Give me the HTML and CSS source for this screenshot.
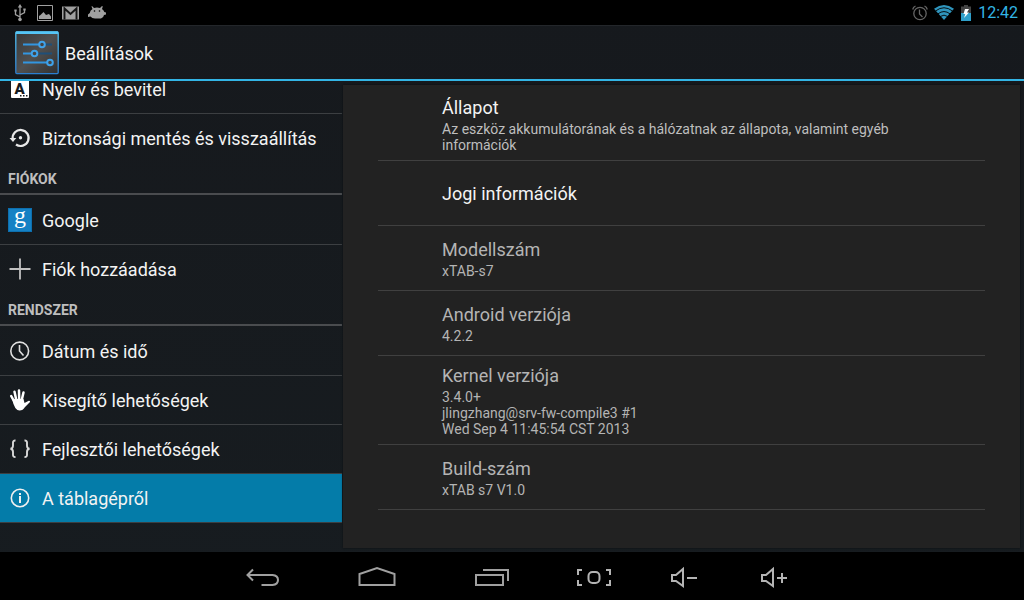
FILE: index.html
```
<!DOCTYPE html>
<html lang="hu">
<head>
    <meta charset="UTF-8">
    <meta name="viewport" content="width=device-width, initial-scale=1.0">
    <title>Beállítások</title>
    <link rel="stylesheet" href="styles.css">
</head>
<body>
    <div class="status-bar">
        <div class="notifications">
            <svg width="16" height="18" viewBox="0 0 16 18" fill="none" stroke="#a0a0a0" stroke-width="1.3">
                <path d="M8 2v13M8 13L3.5 10.500V7M8 11l4.500-2.500V6"/>
                <path d="M8 0l2.200 3.500H5.800zM2.300 5.500h2.400v2H2.300zM11.300 4.500h2.400v2h-2.400z" fill="#a0a0a0" stroke="none"/>
                <circle cx="8" cy="15.500" r="1.800" fill="#a0a0a0" stroke="none"/>
            </svg>
            <svg width="16" height="16" viewBox="0 0 16 16">
                <path d="M.5.5h15v15H.5z" fill="none" stroke="#a0a0a0"/>
                <path d="M2 14v-3l1.500-1L5 8.500l1.500-1.500L9 10l1.500-.5L12 9l2 2.500V14z" fill="#a0a0a0"/>
            </svg>
            <svg width="17" height="14" viewBox="0 0 17 14">
                <path d="M0 .5h17v13H0z" fill="#a0a0a0"/>
                <path d="M2.500 13.500V2.500l6 5.500 6-5.500v11" fill="none" stroke="#151515" stroke-width="1.900"/>
            </svg>
            <svg width="18" height="14" viewBox="0 0 18 14">
                <path d="M4 0l2 2q3-1 6 0l2-2 .8.5-.8 2.500q2 1.500 2.300 3l1.700.5v2l-2 .5q-.5 3-3 3.500H7q-3 0-4.500-2L0 11V8.500L1.800 7Q2 4.500 4.500 3L3.500.5z" fill="#a0a0a0"/>
                <circle cx="6.500" cy="5" r=".8"/>
                <circle cx="11.500" cy="5" r=".8"/>
            </svg>
        </div>
        <div class="system-icons">
            <svg width="16" height="16" viewBox="0 0 16 16" fill="none" stroke="#666" stroke-width="1.300">
                <circle cx="9" cy="8.500" r="6.200"/>
                <path d="M8.500 4.500v4.500l3 3M1.700 4.500Q2.200 2 4.500 1M16.300 4.500Q15.800 2 13.500 1"/>
            </svg>
            <svg width="20" height="15" viewBox="0 0 20 15">
                <path d="M0 3.800Q10-3.600 20 3.800L10 15z" fill="#2f95bd"/>
                <path d="M1.500 6Q10-.5 18.500 6M4 8.800q6-4.500 12 0M6.300 11.500q3.700-2.700 7.400 0" fill="none" stroke="#000" stroke-width=".9"/>
            </svg>
            <svg width="10" height="16" viewBox="0 0 10 16">
                <path d="M0 1.500h3V0h4v1.500h3V16H0z" fill="#444"/>
                <path d="M0 8h10v8H0z" fill="#2f9fc9"/>
                <path d="M4 4h4L6 7.500h2L3 13l1.300-4H2.500z" fill="#fff"/>
            </svg>
            <span class="clock">12:42</span>
        </div>
    </div>

    <header class="action-bar">
        <svg width="44" height="44" viewBox="0 0 44 44">
            <defs>
                <linearGradient id="tile" x1="0" y1="0" x2="1" y2="1">
                    <stop offset="0" stop-color="#383838"/>
                    <stop offset=".5" stop-color="#505050"/>
                    <stop offset="1" stop-color="#303030"/>
                </linearGradient>
                <linearGradient id="edge" x1="0" y1="0" x2="0" y2="1">
                    <stop offset="0" stop-color="#55c5f5"/>
                    <stop offset="1" stop-color="#2b7fd0"/>
                </linearGradient>
            </defs>
            <rect x=".8" y=".8" width="42.400" height="41.800" rx="1" fill="url(#tile)" stroke="url(#edge)" stroke-width="1.300"/>
            <path d="M1 .5h42v2.500H1z" fill="#55c5f5"/>
            <g fill="none" stroke-width="1.800">
                <path d="M30 13.500h7M22 22.500h15" stroke="#1f4f78"/>
                <path d="M8 13.500h16M8 22.500h8M8 31.500h24" stroke="#3296e0"/>
                <g fill="#444" stroke="#3fa2ea" stroke-width="2">
                    <circle cx="27" cy="13.500" r="2.800"/>
                    <circle cx="19.500" cy="22.500" r="2.800"/>
                    <circle cx="35" cy="31.500" r="2.800"/>
                </g>
            </g>
        </svg>
        <h1>Beállítások</h1>
    </header>

    <main>
        <nav class="sidebar">
            <div class="sidebar-list">
                <a class="item" href="#">
                    <svg width="24" height="24" viewBox="0 0 24 24">
                        <rect x="3" y="3" width="18" height="18" rx="1" fill="#fff"/>
                        <text class="letter-icon" x="11.500" y="17">A</text>
                        <path d="M12 18h1.500v1.500H12zM15 18h1.500v1.500H15zM18 18h1.500v1.500H18z" fill="#16191d"/>
                    </svg>
                    Nyelv és bevitel
                </a>
                <a class="item" href="#">
                    <svg width="24" height="24" viewBox="0 0 24 24">
                        <path d="M4.700 13A8 8 0 1 1 8 18.500" fill="none" stroke="#e8e8e8" stroke-width="2.200"/>
                        <path d="M1.500 12h6.800L5 16z" fill="#e8e8e8"/>
                        <circle cx="12.500" cy="11.800" r="1.700" fill="#e8e8e8"/>
                    </svg>
                    Biztonsági mentés és visszaállítás
                </a>
                <h2>FIÓKOK</h2>
                <a class="item" href="#">
                    <svg width="24" height="24" viewBox="0 0 24 24">
                        <rect width="24" height="24" fill="#0d6fae"/>
                        <rect x="1" y="1" width="22" height="22" fill="#1581c4"/>
                        <text class="google-icon" x="12" y="15">g</text>
                    </svg>
                    Google
                </a>
                <a class="item" href="#">
                    <svg width="24" height="24" viewBox="0 0 24 24">
                        <path d="M1.500 12h21M12 1.500v21" stroke="#c0c0c0" stroke-width="1.800"/>
                    </svg>
                    Fiók hozzáadása
                </a>
                <h2>RENDSZER</h2>
                <a class="item" href="#">
                    <svg width="24" height="24" viewBox="0 0 24 24" fill="none" stroke="#e0e0e0" stroke-width="1.600">
                        <circle cx="11.700" cy="12" r="8.900"/>
                        <path d="M11.500 6v6l4 4.500"/>
                    </svg>
                    Dátum és idő
                </a>
                <a class="item" href="#">
                    <svg width="24" height="24" viewBox="0 0 24 24">
                        <g fill="none" stroke="#fff" stroke-width="2.500" stroke-linecap="round">
                            <path d="M7 15L3.200 8M8.500 13L6.500 3.700M11.200 13l-.2-10.500M13.500 13L15.500 4.500"/>
                        </g>
                        <path d="M4.300 11.500Q6.500 22.500 11.500 22.500q3.500 0 5.500-3.500l5-5q.3-1.300-1.200-1.200L16.500 15l-1-4H7z" fill="#fff"/>
                    </svg>
                    Kisegítő lehetőségek
                </a>
                <a class="item" href="#">
                    <svg width="24" height="24" viewBox="0 0 24 24" fill="none" stroke="#d8d8d8" stroke-width="1.900">
                        <path d="M7.500 3.500Q5 3.300 5 5.500v3.300Q5 11.500 2.500 11.800 5 12.200 5 15v3q0 2.200 2.500 2M16.500 3.500q2.500-.2 2.500 2v3.300q0 2.700 2.500 3-2.500.4-2.500 3.200v3q0 2.200-2.500 2"/>
                    </svg>
                    Fejlesztői lehetőségek
                </a>
                <a class="item active" href="#">
                    <svg width="24" height="24" viewBox="0 0 24 24">
                        <circle cx="12" cy="12" r="8.700" fill="none" stroke="#f0f0f0" stroke-width="1.600"/>
                        <path d="M11 7h2v2h-2zM11 10h2v7h-2z" fill="#f0f0f0"/>
                    </svg>
                    A táblagépről
                </a>
            </div>
        </nav>

        <section class="panel">
            <div class="pref">
                <h3>Állapot</h3>
                <p>Az eszköz akkumulátorának és a hálózatnak az állapota, valamint egyéb információk</p>
            </div>
            <div class="pref">
                <h3>Jogi információk</h3>
            </div>
            <div class="pref disabled">
                <h3>Modellszám</h3>
                <p>xTAB-s7</p>
            </div>
            <div class="pref disabled">
                <h3>Android verziója</h3>
                <p>4.2.2</p>
            </div>
            <div class="pref disabled">
                <h3>Kernel verziója</h3>
                <p>3.4.0+<br>jlingzhang@srv-fw-compile3 #1<br>Wed Sep 4 11:45:54 CST 2013</p>
            </div>
            <div class="pref disabled">
                <h3>Build-szám</h3>
                <p>xTAB s7 V1.0</p>
            </div>
        </section>
    </main>

    <footer class="nav-bar">
        <button type="button" class="nav-main" aria-label="Vissza">
            <svg width="36" height="24" viewBox="0 0 36 24" fill="none" stroke="#a0a0a0" stroke-width="2">
                <path d="M9 3.500L3.500 9 9 14.500M3.500 9h25q5.500.5 5.500 5t-5.500 5h-11"/>
            </svg>
        </button>
        <button type="button" class="nav-main" aria-label="Kezdőképernyő">
            <svg width="38" height="24" viewBox="0 0 38 24" fill="none" stroke="#a0a0a0" stroke-width="2">
                <path d="M1.500 19V8L19 2l17.500 6v11z"/>
            </svg>
        </button>
        <button type="button" class="nav-main" aria-label="Legutóbbiak">
            <svg width="36" height="24" viewBox="0 0 36 24" fill="none" stroke="#a0a0a0" stroke-width="2">
                <path d="M2 9h27v10H2zM9 4h25v11"/>
            </svg>
        </button>
        <button type="button" class="nav-extra" aria-label="Képernyőkép">
            <svg width="36" height="24" viewBox="0 0 36 24" fill="none" stroke="#b4b4b4" stroke-width="2">
                <path d="M5 4H1v5M1 14v5h4M29 4h4v5M33 14v5h-4"/>
                <rect x="11.500" y="6" width="11" height="11" rx="4"/>
            </svg>
        </button>
        <button type="button" class="nav-extra" aria-label="Halkítás">
            <svg width="28" height="24" viewBox="0 0 28 24" fill="none" stroke="#b4b4b4" stroke-width="2">
                <path d="M1 9h4l7-6v17l-7-5H1zM16 12h10"/>
            </svg>
        </button>
        <button type="button" class="nav-extra" aria-label="Hangosítás">
            <svg width="28" height="24" viewBox="0 0 28 24" fill="none" stroke="#b4b4b4" stroke-width="2">
                <path d="M1 9h4l7-6v17l-7-5H1zM16 12h10M21 7v10"/>
            </svg>
        </button>
    </footer>
</body>
</html>
```
FILE: styles.css
```
* {
    box-sizing: border-box;
}
body {
    display: flex;
    flex-direction: column;
    height: 100vh;
    margin: 0;
    background: linear-gradient(#16191d, #171c20);
    color: #f3f3f3;
    font-family: Roboto, sans-serif;
    overflow: hidden;
}
h1,
h2,
h3,
p {
    margin: 0;
    font-weight: normal;
}
svg {
    display: block;
    flex: none;
    overflow: visible;
}
.status-bar {
    display: flex;
    justify-content: space-between;
    align-items: center;
    height: 25px;
    padding: 0 6px 0 12px;
    background-color: #000;
}
.notifications {
    display: flex;
    align-items: center;
    gap: 9px;
}
.system-icons {
    display: flex;
    align-items: center;
    gap: 7px;
}
.clock {
    color: #33b5e5;
    font-size: 16px;
    line-height: 24px;
}
.action-bar {
    display: flex;
    align-items: center;
    gap: 6px;
    height: 56px;
    padding-left: 15px;
    border-top: 1px solid #23262a;
    border-bottom: 2px solid #33b5e5;
}
.action-bar h1 {
    padding-top: 2px;
    font-size: 18px;
}
main {
    display: flex;
    flex: 1;
    gap: 1px;
    min-height: 0;
    padding-right: 4px;
}
.sidebar {
    flex: none;
    width: 342px;
    overflow: hidden;
}
/* list is scrolled down a little, first row is partly hidden */
.sidebar-list {
    margin-top: -16px;
}
.item {
    display: flex;
    align-items: center;
    gap: 10px;
    height: 49px;
    padding-left: 8px;
    border-bottom: 1px solid #3c3f42;
    color: #f3f3f3;
    font-size: 18px;
    text-decoration: none;
}
.item:has(+ h2) {
    height: 48px;
    border-bottom: none;
}
.item.active {
    background-color: #047ca9;
}
.sidebar h2 {
    margin-bottom: 1px;
    padding: 4px 8px 0;
    border-bottom: 2px solid #4a4c4f;
    color: #bebebe;
    font-size: 14px;
    font-weight: bold;
    line-height: 27px;
}
.letter-icon {
    fill: #16191d;
    font: 900 15px Roboto, sans-serif;
    text-anchor: middle;
}
.google-icon {
    fill: #fff;
    font: 24px "Liberation Serif", serif;
    text-anchor: middle;
}
.panel {
    flex: 1;
    margin: 4px 0;
    padding: 3px 35px;
    background-color: #222;
    box-shadow: 0 0 2px #0c0e10;
    overflow: hidden;
}
.pref {
    display: flex;
    flex-direction: column;
    justify-content: center;
    min-height: 65px;
    padding: 9px 64px 7px;
    border-bottom: 1px solid #404040;
}
.pref h3 {
    font-size: 18px;
    line-height: 22px;
}
.pref p {
    margin-top: 2px;
    color: #bebebe;
    font-size: 14px;
    line-height: 16px;
}
.pref.disabled h3,
.pref.disabled p {
    color: #b4b4b4;
}
.nav-bar {
    display: flex;
    justify-content: center;
    height: 48px;
    background-color: #000;
}
.nav-bar button {
    display: flex;
    align-items: center;
    justify-content: center;
    padding: 3px 0 0;
    border: none;
    background: none;
}
.nav-main {
    width: 115px;
}
.nav-extra {
    width: 90px;
}
```
